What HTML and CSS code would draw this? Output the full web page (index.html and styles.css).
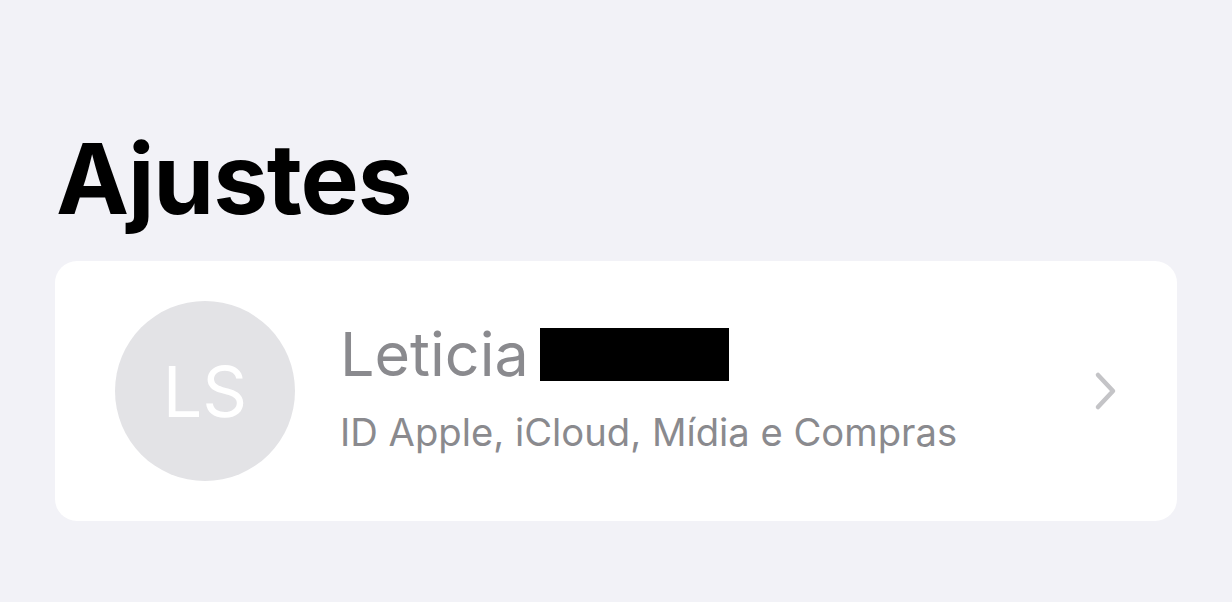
FILE: index.html
```html
<!DOCTYPE html>
<html lang="pt">
<head>
<meta charset="utf-8">
<link rel="stylesheet" href="styles.css">
</head>
<body>
<main class="page">
  <h1 class="title">Ajustes</h1>
  <section class="card">
    <div class="avatar">LS</div>
    <div class="info">
      <div class="name">Leticia <span class="redact"></span></div>
      <div class="sub">ID Apple, iCloud, Mídia e Compras</div>
    </div>
    <svg class="chev" width="26" height="40" viewBox="0 0 26 40">
      <path d="M5 4 L20 20 L5 36" fill="none" stroke="#c4c4c7" stroke-width="4.5" stroke-linecap="round" stroke-linejoin="round"/>
    </svg>
  </section>
</main>
</body>
</html>
```
FILE: styles.css
```css
html, body {
  margin: 0;
  padding: 0;
  background: #f2f2f7;
  width: 1232px;
  height: 602px;
  overflow: hidden;
  font-family: Inter, "Noto Sans", sans-serif;
}
.page {
  padding: 119px 55px 0 55px;
}
.title {
  margin: 0 0 0 1px;
  font-size: 98px;
  font-weight: 700;
  line-height: 120px;
  letter-spacing: -1.2px;
  color: #000;
}
.card {
  margin-top: 22px;
  height: 260px;
  background: #fff;
  border-radius: 22px;
  display: flex;
  align-items: center;
  padding: 0 58px 0 60px;
  box-sizing: border-box;
}
.avatar {
  width: 180px;
  height: 180px;
  border-radius: 50%;
  background: #e3e3e6;
  color: #fff;
  font-size: 70px;
  font-weight: 400;
  display: flex;
  align-items: center;
  justify-content: center;
  flex-shrink: 0;
}
.info {
  flex: 1;
  margin-left: 45px;
  padding-bottom: 9px;
  display: flex;
  flex-direction: column;
}
.name {
  font-size: 61px;
  line-height: 72px;
  color: #8a8a8e;
  display: flex;
  align-items: center;
}
.redact {
  display: inline-block;
  width: 189px;
  height: 53px;
  background: #000;
  margin-left: 11px;
}
.sub {
  margin-top: 19px;
  font-size: 38.2px;
  line-height: 46px;
  color: #8a8a8e;
}
.chev {
  flex-shrink: 0;
}
```
